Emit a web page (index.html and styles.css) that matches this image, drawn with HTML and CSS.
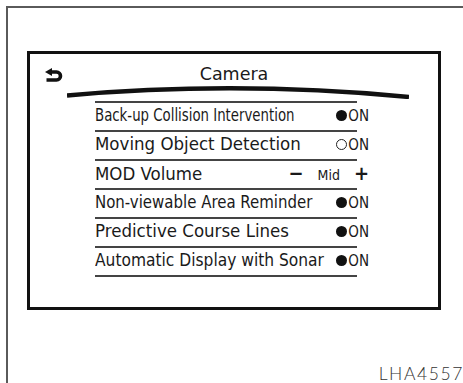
FILE: index.html
```html
<!DOCTYPE html>
<html>
<head>
	<title>Camera settings</title>
	<meta name="viewport" content="width=device-width, initial-scale=1">
	<link rel="stylesheet" href="styles.css">
</head>
<body>
	<div class="frame">
		<div class="screen">
			<div class="screen-head">
				<svg class="back-icon" width="18" height="14" viewBox="0 0 18 14">
					<polygon points="0,4 7,0 7,8" fill="#111"/>
					<path d="M5 4 H11.5 A4 4 0 0 1 11.5 12 H1.5" fill="none" stroke="#111" stroke-width="3.6"/>
				</svg>
				<div class="screen-title">Camera</div>
			</div>
			<svg class="arc" width="342" height="14" viewBox="0 0 342 14">
				<path d="M0 10.5 Q170 -4.5 342 12" fill="none" stroke="#111" stroke-width="4.5"/>
			</svg>

			<div class="menu">
				<div class="menu-row">
					<span class="menu-label"><span class="squeeze-80">Back-up Collision Intervention</span></span>
					<span class="menu-value"><span class="dot"></span>ON</span>
				</div>
				<div class="menu-row">
					<span class="menu-label">Moving Object Detection</span>
					<span class="menu-value"><span class="dot off"></span>ON</span>
				</div>
				<div class="menu-row">
					<span class="menu-label">MOD Volume</span>
					<span class="menu-value volume"><b>&minus;</b><span class="mid">Mid</span><b>+</b></span>
				</div>
				<div class="menu-row">
					<span class="menu-label"><span class="squeeze-90">Non-viewable Area Reminder</span></span>
					<span class="menu-value"><span class="dot"></span>ON</span>
				</div>
				<div class="menu-row">
					<span class="menu-label">Predictive Course Lines</span>
					<span class="menu-value"><span class="dot"></span>ON</span>
				</div>
				<div class="menu-row">
					<span class="menu-label"><span class="squeeze-93">Automatic Display with Sonar</span></span>
					<span class="menu-value"><span class="dot"></span>ON</span>
				</div>
			</div>
		</div>

		<div class="caption">LHA4557</div>
	</div>
</body>
</html>
```

FILE: styles.css
```css
body,html{
	margin:0;
	background:white;
	overflow:hidden;
	font-family:"DejaVu Sans", sans-serif;
	color:#1a1a1a;
}

.frame{
	box-sizing:border-box;
	margin:6px 0 0 6px;
	height:377px;
	border-left:2px solid #5a5a5a;
	border-top:2px solid #5a5a5a;
}

.screen{
	margin:43px 0 0 19px;
	width:408px;
	height:253px;
	border:3px solid #111;
}

.screen-head{
	display:grid;
	grid-template-columns:1fr auto 1fr;
	align-items:start;
	padding-top:10px;
	height:20px;
}

.back-icon{
	margin:4px 0 0 15px;
}

.screen-title{
	font-size:17.5px;
	line-height:20px;
}

.arc{
	display:block;
	margin:1px 0 0 37px;
}

.menu{
	margin:2px 0 0 65px;
	width:262px;
	border-top:2px solid #444;
	font-family:"DejaVu Sans Condensed", "DejaVu Sans", sans-serif;
	font-stretch:condensed;
}

.menu-row{
	display:flex;
	justify-content:space-between;
	align-items:baseline;
	height:27px;
	border-bottom:2px solid #444;
}

.menu-label{
	min-width:0;
	font-size:18.5px;
	line-height:23px;
	white-space:nowrap;
}

/* the scanned screen squeezes some of the longer labels */
.squeeze-80,
.squeeze-90,
.squeeze-93{
	display:inline-block;
	transform-origin:left;
}
.squeeze-80{ transform:scaleX(0.8); }
.squeeze-90{ transform:scaleX(0.9); }
.squeeze-93{ transform:scaleX(0.93); }

.menu-value{
	flex-shrink:0;
	font-size:15px;
	margin-right:-12px;
	white-space:nowrap;
}

.dot{
	display:inline-block;
	width:11px;
	height:11px;
	margin-right:1px;
	border-radius:50%;
	background:#111;
}

.dot.off{
	box-sizing:border-box;
	background:white;
	border:1.5px solid #222;
}

.volume{
	display:flex;
	align-items:baseline;
}

.volume b{
	font-family:"DejaVu Sans", sans-serif;
	font-size:20px;
}

.mid{
	font-size:14px;
	margin:0 14px;
}

.caption{
	margin:54px -1px 0 0;
	text-align:right;
	font-family:Lato, sans-serif;
	font-weight:300;
	font-size:17.5px;
	line-height:20px;
	letter-spacing:1.6px;
	color:#333;
}
```
